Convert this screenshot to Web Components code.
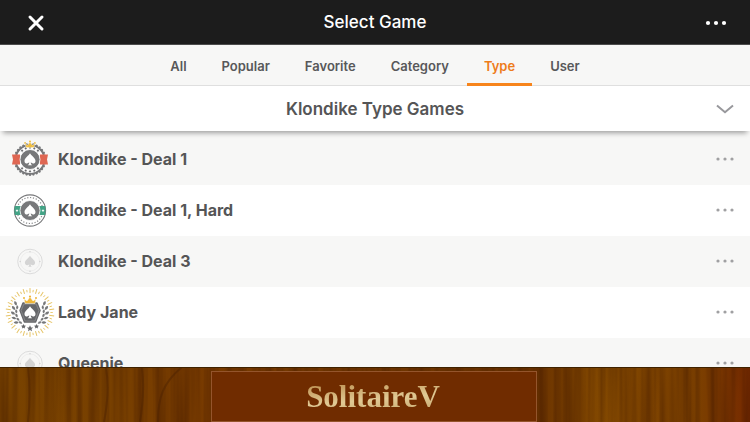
<!DOCTYPE html>
<html lang="en">
<head>
<meta charset="utf-8">
<meta name="viewport" content="width=device-width, initial-scale=1">
<title>Select Game</title>
<style>
    body {
        margin: 0;
        font-family: Inter, "Liberation Sans", sans-serif;
        color: #555556;
    }
</style>
</head>
<body>
<game-picker>
    <title-bar slot="title">Select Game</title-bar>
    <tab-bar slot="tabs">
        <tab-item>All</tab-item>
        <tab-item>Popular</tab-item>
        <tab-item>Favorite</tab-item>
        <tab-item>Category</tab-item>
        <tab-item selected>Type</tab-item>
        <tab-item>User</tab-item>
    </tab-bar>
    <type-heading slot="heading">Klondike Type Games</type-heading>
    <game-row badge="ribbon">Klondike - Deal 1</game-row>
    <game-row badge="chip">Klondike - Deal 1, Hard</game-row>
    <game-row badge="blank">Klondike - Deal 3</game-row>
    <game-row badge="laurel">Lady Jane</game-row>
    <game-row badge="blank">Queenie</game-row>
    <wood-banner slot="banner">SolitaireV</wood-banner>
</game-picker>

<script>
const SPADE = 'M0 -6.5 C1 -4.2 5.8 -1.6 5.8 1.5 C5.8 4.6 2.2 5 .8 3 C.9 4.6 1.3 5.4 2.4 6 H-2.4 C-1.3 5.4 -.9 4.6 -.8 3 C-2.2 5 -5.8 4.6 -5.8 1.5 C-5.8 -1.6 -1 -4.2 0 -6.5Z';
const STAR = 'M0 -2.6 L.8 -.9 L2.5 -.8 L1.2 .4 L1.6 2.1 L0 1.2 L-1.6 2.1 L-1.2 .4 L-2.5 -.8 L-.8 -.9Z';
const CROWN = 'M-5 3 L-6 -1.5 L-3 .4 L0 -3.4 L3 .4 L6 -1.5 L5 3Z';

// repeats a bit of markup around the centre, one copy for each angle
function around(angles, markup) {
    return angles.map(a => `<g transform="rotate(${a})">${markup}</g>`).join('');
}

function steps(count, offset = 0) {
    return Array.from({ length: count }, (_, i) => offset + i * 360 / count);
}

const badges = {
    ribbon() {
        return `
            ${around(steps(28), '<circle cy="-15.2" r="1.3" fill="#77787a"/>')}
            <circle r="14.4" fill="#fff" stroke="#77787a" stroke-width="1.8"/>
            ${around([-42, -21, 0, 21, 42, 138, 159, 180, 201, 222], `<path transform="translate(0 -11.9) scale(.6)" d="${STAR}" fill="#66676a"/>`)}
            <path d="M-18 -5 H-10 V5 H-18 L-17 0Z M18 -5 H10 V5 H18 L17 0Z" fill="#df6753"/>
            <circle r="10" fill="#77787a" stroke="#fff" stroke-width=".8"/>
            <path d="${SPADE}" transform="scale(.95)" fill="#fff"/>
            <path d="${CROWN}" transform="translate(0 -14.5) scale(.8)" fill="#f0bd3c" stroke="#fff" stroke-width=".5"/>
            <circle cx="-4.9" cy="-16.6" r=".9" fill="#f0bd3c"/><circle cy="-18" r="1" fill="#f0bd3c"/><circle cx="4.9" cy="-16.6" r=".9" fill="#f0bd3c"/>`;
    },
    chip() {
        return `
            <circle r="15.6" fill="#fff" stroke="#77787a" stroke-width="1.1"/>
            <circle r="13" fill="none" stroke="#8a8b8d" stroke-width="1.2" stroke-dasharray="1.2 1.7"/>
            <path d="M-15.2 -4.4 H-9 V4.4 H-15.2 Q-16 0 -15.2 -4.4Z M15.2 -4.4 H9 V4.4 H15.2 Q16 0 15.2 -4.4Z" fill="#43a386"/>
            <path transform="translate(-13 0) scale(.6)" d="${STAR}" fill="#fff"/>
            <path transform="translate(13 0) scale(.6)" d="${STAR}" fill="#fff"/>
            <circle r="10" fill="#77787a" stroke="#fff" stroke-width=".8"/>
            <path d="${SPADE}" transform="scale(.95)" fill="#fff"/>`;
    },
    blank() {
        return `
            <circle r="12.3" fill="none" stroke="#dcdcdc" stroke-width="1"/>
            <circle r="9.6" fill="none" stroke="#e8e8e8" stroke-width=".7"/>
            ${around(steps(4), '<circle cy="-9.8" r=".8" fill="#d4d4d4"/>')}
            <path d="${SPADE}" transform="scale(.88)" fill="#d4d4d4"/>`;
    },
    laurel() {
        const leaf = '<path d="M0 -19.6 Q2.6 -17 0 -14.6 Q-2.6 -17 0 -19.6Z" transform="rotate(-35 0 -17)" fill="#77787a"/>';
        const inner = '<path d="M0 -15.9 Q2.3 -13.8 0 -11.7 Q-2.3 -13.8 0 -15.9Z" transform="rotate(-75 0 -13.8)" fill="#77787a"/>';
        const branch = around([58, 75, 92, 109, 126], leaf) + around([68, 85, 102, 119, 136], inner);
        return `
            ${around(steps(22), '<path d="M0 -19.4 V-24.4" stroke="#e6c467" stroke-width="1"/>')}
            ${around(steps(22, 8.2), '<path d="M0 -20.4 V-22.8" stroke="#e6c467" stroke-width=".9"/>')}
            ${branch}<g transform="scale(-1 1)">${branch}</g>
            <path d="M-7 -9.5 H7 L10 -2 L5.6 9.5 H-5.6 L-10 -2Z" fill="#66676a" stroke="#66676a" stroke-width="1.4" stroke-linejoin="round"/>
            <path d="M-6.2 -8.4 H6.2 L8.9 -2 L4.9 8.5 H-4.9 L-8.9 -2Z" fill="none" stroke="#9b9c9e" stroke-width=".6"/>
            <path d="${SPADE}" transform="scale(.95)" fill="#fff"/>
            <path d="${CROWN}" transform="translate(0 -12)" fill="#efb73a" stroke="#fff" stroke-width=".5"/>
            <circle cx="-6" cy="-14.4" r="1" fill="#efb73a"/><circle cy="-16" r="1.1" fill="#efb73a"/><circle cx="6" cy="-14.4" r="1" fill="#efb73a"/>
            <path d="${STAR}" transform="translate(-6.5 14)" fill="#66676a"/>
            <path d="${STAR}" transform="translate(0 16) scale(1.25)" fill="#66676a"/>
            <path d="${STAR}" transform="translate(6.5 14)" fill="#66676a"/>`;
    }
};

class GamePicker extends HTMLElement {
    constructor() {
        super();
        this.attachShadow({ mode: 'open' });
        this.shadowRoot.innerHTML = `
        <style>
            :host {
                display: flex;
                flex-direction: column;
                height: 100vh;
                background: #f7f7f6;
            }
            main {
                flex: 1;
                min-height: 0;
                padding-top: 3px;
                overflow-y: auto;
                scrollbar-width: none;
            }
        </style>
        <slot name="title"></slot>
        <slot name="tabs"></slot>
        <slot name="heading"></slot>
        <main><slot></slot></main>
        <slot name="banner"></slot>
        `;
    }
}

class TitleBar extends HTMLElement {
    constructor() {
        super();
        this.attachShadow({ mode: 'open' });
        this.shadowRoot.innerHTML = `
        <style>
            :host {
                display: grid;
                grid-template-columns: 46px 1fr 44px;
                align-items: center;
                box-sizing: border-box;
                flex: none;
                height: 45px;
                padding: 0 12px 0 13px;
                background: #1c1c1c;
                border-bottom: 1px solid #4c4c4c;
                color: #fff;
            }
            h1 {
                margin: 0;
                padding-right: 3px;
                font-size: 17px;
                line-height: 24px;
                font-weight: 500;
                text-align: center;
            }
            button {
                display: flex;
                align-items: center;
                justify-content: center;
                height: 44px;
                padding: 1px 0 0;
                border: 0;
                background: none;
                color: inherit;
            }
        </style>
        <button aria-label="Close">
            <svg width="18" height="18" viewBox="0 0 18 18"><path d="M3 3 L15 15 M15 3 L3 15" stroke="currentColor" stroke-width="3" stroke-linecap="round"/></svg>
        </button>
        <h1><slot></slot></h1>
        <button aria-label="More">
            <svg width="22" height="6" viewBox="0 0 22 6" fill="currentColor"><circle cx="3" cy="3" r="2.1"/><circle cx="11" cy="3" r="2.1"/><circle cx="19" cy="3" r="2.1"/></svg>
        </button>
        `;
    }
}

class TabBar extends HTMLElement {
    constructor() {
        super();
        this.attachShadow({ mode: 'open' });
        this.shadowRoot.innerHTML = `
        <style>
            :host {
                display: flex;
                justify-content: center;
                gap: 1px;
                box-sizing: border-box;
                flex: none;
                height: 41px;
                background: #f7f7f6;
                box-shadow: inset 0 -1px #dfdfdf;
            }
        </style>
        <slot></slot>
        `;
        this.addEventListener('click', (e) => {
            const tab = e.target.closest('tab-item');
            if (!tab) return;
            this.querySelectorAll('tab-item').forEach(t => t.toggleAttribute('selected', t === tab));
        });
    }
}

class TabItem extends HTMLElement {
    constructor() {
        super();
        this.attachShadow({ mode: 'open' });
        this.shadowRoot.innerHTML = `
        <style>
            :host {
                display: flex;
            }
            button {
                padding: 3px 17px 0;
                border: 0;
                border-bottom: 3px solid transparent;
                background: none;
                color: #58585a;
                font-family: inherit;
                font-size: 13px;
                line-height: 20px;
                font-weight: 600;
                cursor: pointer;
            }
            :host([selected]) button {
                color: #ee7c1b;
                border-color: #f7841b;
            }
        </style>
        <button><slot></slot></button>
        `;
    }
}

class TypeHeading extends HTMLElement {
    constructor() {
        super();
        this.attachShadow({ mode: 'open' });
        this.shadowRoot.innerHTML = `
        <style>
            :host {
                display: grid;
                grid-template-columns: 50px 1fr 50px;
                align-items: center;
                box-sizing: border-box;
                flex: none;
                position: relative;
                height: 45px;
                background: #fff;
                box-shadow: 0 5px 5px -3px rgba(0, 0, 0, 0.36);
            }
            h2 {
                grid-column: 2;
                margin: 0;
                font-size: 17px;
                line-height: 24px;
                font-weight: 600;
                text-align: center;
            }
            button {
                display: flex;
                align-items: center;
                justify-content: center;
                height: 44px;
                padding: 0;
                border: 0;
                background: none;
                color: #98989c;
            }
        </style>
        <h2><slot></slot></h2>
        <button aria-label="Choose type">
            <svg width="18" height="10" viewBox="0 0 18 10" fill="none"><path d="M1 1.5 L9 8.2 L17 1.5" stroke="currentColor" stroke-width="2"/></svg>
        </button>
        `;
    }
}

class GameRow extends HTMLElement {
    constructor() {
        super();
        this.attachShadow({ mode: 'open' });
        this.shadowRoot.innerHTML = `
        <style>
            :host {
                display: grid;
                grid-template-columns: 1fr 50px;
                height: 51px;
                background: #f7f7f6;
            }
            :host(:nth-of-type(even)) {
                background: #fff;
            }
            button {
                display: flex;
                align-items: center;
                padding: 0 0 1px;
                border: 0;
                background: none;
                color: inherit;
                font-family: inherit;
                cursor: pointer;
            }
            .name {
                gap: 3px;
                padding-left: 5px;
                font-size: 16px;
                line-height: 24px;
                font-weight: 700;
            }
            .more {
                justify-content: center;
                color: #a0a0a2;
            }
        </style>
        <button class="name">
            <svg id="badge" width="50" height="50" viewBox="-25 -25.5 50 50"></svg>
            <span><slot></slot></span>
        </button>
        <button class="more" aria-label="Game options">
            <svg width="18" height="4" viewBox="0 0 18 4" fill="currentColor"><circle cx="2" cy="2" r="1.6"/><circle cx="9" cy="2" r="1.6"/><circle cx="16" cy="2" r="1.6"/></svg>
        </button>
        `;
    }

    connectedCallback() {
        const draw = badges[this.getAttribute('badge')] || badges.blank;
        this.shadowRoot.querySelector('#badge').innerHTML = draw();
    }
}

class WoodBanner extends HTMLElement {
    constructor() {
        super();
        this.attachShadow({ mode: 'open' });
        this.shadowRoot.innerHTML = `
        <style>
            :host {
                display: grid;
                justify-items: center;
                box-sizing: border-box;
                flex: none;
                height: 55px;
                padding: 4px 2px 0 0;
                position: relative;
                overflow: hidden;
                background: #6d3700;
            }
            /* grain lies under the name plate */
            .grain {
                position: absolute;
                inset: 0;
                width: 100%;
                height: 100%;
            }
            .plate {
                position: relative;
                display: flex;
                align-items: center;
                justify-content: center;
                box-sizing: border-box;
                width: 326px;
                max-width: 100%;
                height: 51px;
                background: #702c00;
                border: 1px solid #94552c;
            }
            .plate span {
                padding-right: 2px;
                font-family: "Liberation Serif", serif;
                font-size: 31px;
                line-height: 40px;
                font-weight: 700;
                color: transparent;
                background: linear-gradient(175deg, #c39a5c 20%, #e0c994 55%, #cdb077 80%);
                -webkit-background-clip: text;
                background-clip: text;
            }
        </style>
        <svg class="grain" aria-hidden="true">
            <defs>
                <filter id="fine" x="0" y="0" width="100%" height="100%" color-interpolation-filters="sRGB">
                    <feTurbulence type="fractalNoise" baseFrequency="0.11 0.003" numOctaves="3" seed="8"/>
                    <feColorMatrix values="0 0 0 0 .22  0 0 0 0 .07  0 0 0 0 0  .9 0 0 0 -.3"/>
                </filter>
                <linearGradient id="tone">
                    <stop offset="0" stop-color="#794300"/>
                    <stop offset=".15" stop-color="#784000"/>
                    <stop offset=".28" stop-color="#783a00"/>
                    <stop offset=".71" stop-color="#6a3200"/>
                    <stop offset=".8" stop-color="#824800"/>
                    <stop offset=".93" stop-color="#7c4000"/>
                    <stop offset="1" stop-color="#762a00"/>
                </linearGradient>
            </defs>
            <rect width="100%" height="100%" fill="url(#tone)"/>
            <rect width="100%" height="100%" filter="url(#fine)"/>
            <path d="M158 55 C158 30 163 16 182 0 M28 55 Q31 25 28 0 M104 55 Q110 25 106 0 M140 55 Q145 25 142 0" fill="none" stroke="#4b2200" stroke-opacity=".45" stroke-width="2"/>
            <rect width="100%" height="1" fill="#3f2200"/>
        </svg>
        <div class="plate"><span><slot></slot></span></div>
        `;
    }
}

customElements.define('game-picker', GamePicker);
customElements.define('title-bar', TitleBar);
customElements.define('tab-bar', TabBar);
customElements.define('tab-item', TabItem);
customElements.define('type-heading', TypeHeading);
customElements.define('game-row', GameRow);
customElements.define('wood-banner', WoodBanner);
</script>
</body>
</html>
